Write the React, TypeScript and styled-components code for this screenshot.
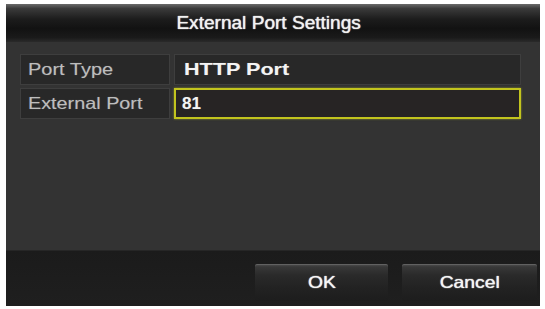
import React from "react";
import styled, { createGlobalStyle } from "styled-components";

const Global = createGlobalStyle`
  html, body { margin: 0; padding: 0; background: #ffffff; }
  body { font-family: "Liberation Sans", Arial, sans-serif; }
`;

const Page = styled.div`
  width: 545px;
  height: 309px;
  padding: 4px 5px 3px 6px;
  box-sizing: border-box;
  background: #fff;
`;

const Dialog = styled.div`
  width: 534px;
  height: 302px;
  display: flex;
  flex-direction: column;
  background: #333333;
  overflow: hidden;
`;

const TitleBar = styled.div`
  height: 38px;
  flex: none;
  display: flex;
  align-items: center;
  justify-content: center;
  background: linear-gradient(
    to bottom,
    #6a6a6a 0%,
    #3a3a3a 12%,
    #1c1c1c 40%,
    #121212 65%,
    #1a1a1a 88%,
    #2a2a2a 100%
  );
`;

const Stretch = styled.span<{ $sx: number; $origin?: string }>`
  display: inline-block;
  transform: scaleX(${(p) => p.$sx});
  transform-origin: ${(p) => p.$origin ?? "left center"};
  white-space: nowrap;
`;

const Title = styled.div`
  color: #f2f2f2;
  font-size: 17.5px;
  font-weight: 400;
  text-shadow: 0 0 1px rgba(255, 255, 255, 0.8), 0 0 1px rgba(255, 255, 255, 0.5);
  margin-left: -9px;
`;

const Body = styled.div`
  flex: 1;
  padding: 12px 19px 0 14px;
  background: #333333;
`;

const Table = styled.div`
  display: grid;
  grid-template-columns: 150px 1fr;
  column-gap: 4px;
  row-gap: 3px;
`;

const Cell = styled.div<{ $kind: "label" | "value" | "input" }>`
  height: 31px;
  box-sizing: border-box;
  display: flex;
  align-items: center;
  padding-left: ${(p) => (p.$kind === "label" ? "7px" : p.$kind === "input" ? "6px" : "9px")};
  background: ${(p) => (p.$kind === "input" ? "#272424" : "#282828")};
  border: ${(p) =>
    p.$kind === "input" ? "2px solid #c2c41e" : "1px solid #3e3e3e"};
  box-shadow: ${(p) =>
    p.$kind === "input" ? "0 0 2px rgba(200, 205, 40, 0.6)" : "none"};
  color: ${(p) => (p.$kind === "label" ? "#bdbdbd" : "#f4f4f4")};
  font-size: ${(p) => (p.$kind === "label" ? "16.5px" : "17px")};
  font-weight: ${(p) => (p.$kind === "label" ? 400 : 700)};
  text-shadow: 0 0 1px rgba(255, 255, 255, 0.3);
`;

const Footer = styled.div`
  height: 56px;
  flex: none;
  box-sizing: border-box;
  display: flex;
  justify-content: flex-end;
  align-items: flex-start;
  gap: 14px;
  padding: 13px 3px 0 0;
  background: linear-gradient(to bottom, #1b1b1b 0%, #1f1f1f 100%);
  border-top: 1px solid #262626;
`;

const Button = styled.button<{ $w: number }>`
  width: ${(p) => p.$w}px;
  height: 37px;
  border: none;
  border-radius: 2px;
  padding: 0;
  display: flex;
  align-items: center;
  justify-content: center;
  color: #f6f6f6;
  font-family: "Liberation Sans", Arial, sans-serif;
  font-size: 16.5px;
  font-weight: 400;
  text-shadow: 0 0 1px rgba(255, 255, 255, 0.8), 0 0 1px rgba(255, 255, 255, 0.5);
  background: linear-gradient(
    to bottom,
    #505050 0%,
    #383838 8%,
    #2a2a2a 30%,
    #222222 65%,
    #1d1d1d 100%
  );
  box-shadow: inset 0 1px 0 rgba(255, 255, 255, 0.12);
`;

export default function App() {
  return (
    <>
      <Global />
      <Page>
        <Dialog>
          <TitleBar>
            <Title>
              <Stretch $sx={1.09} $origin="center center">External Port Settings</Stretch>
            </Title>
          </TitleBar>
          <Body>
            <Table>
              <Cell $kind="label">
                <Stretch $sx={1.21}>Port Type</Stretch>
              </Cell>
              <Cell $kind="value">
                <Stretch $sx={1.27}>HTTP Port</Stretch>
              </Cell>
              <Cell $kind="label">
                <Stretch $sx={1.2}>External Port</Stretch>
              </Cell>
              <Cell $kind="input">
                <Stretch $sx={1.0}>81</Stretch>
              </Cell>
            </Table>
          </Body>
          <Footer>
            <Button $w={133}>
              <Stretch $sx={1.17} $origin="center center">OK</Stretch>
            </Button>
            <Button $w={135}>
              <Stretch $sx={1.17} $origin="center center">Cancel</Stretch>
            </Button>
          </Footer>
        </Dialog>
      </Page>
    </>
  );
}
